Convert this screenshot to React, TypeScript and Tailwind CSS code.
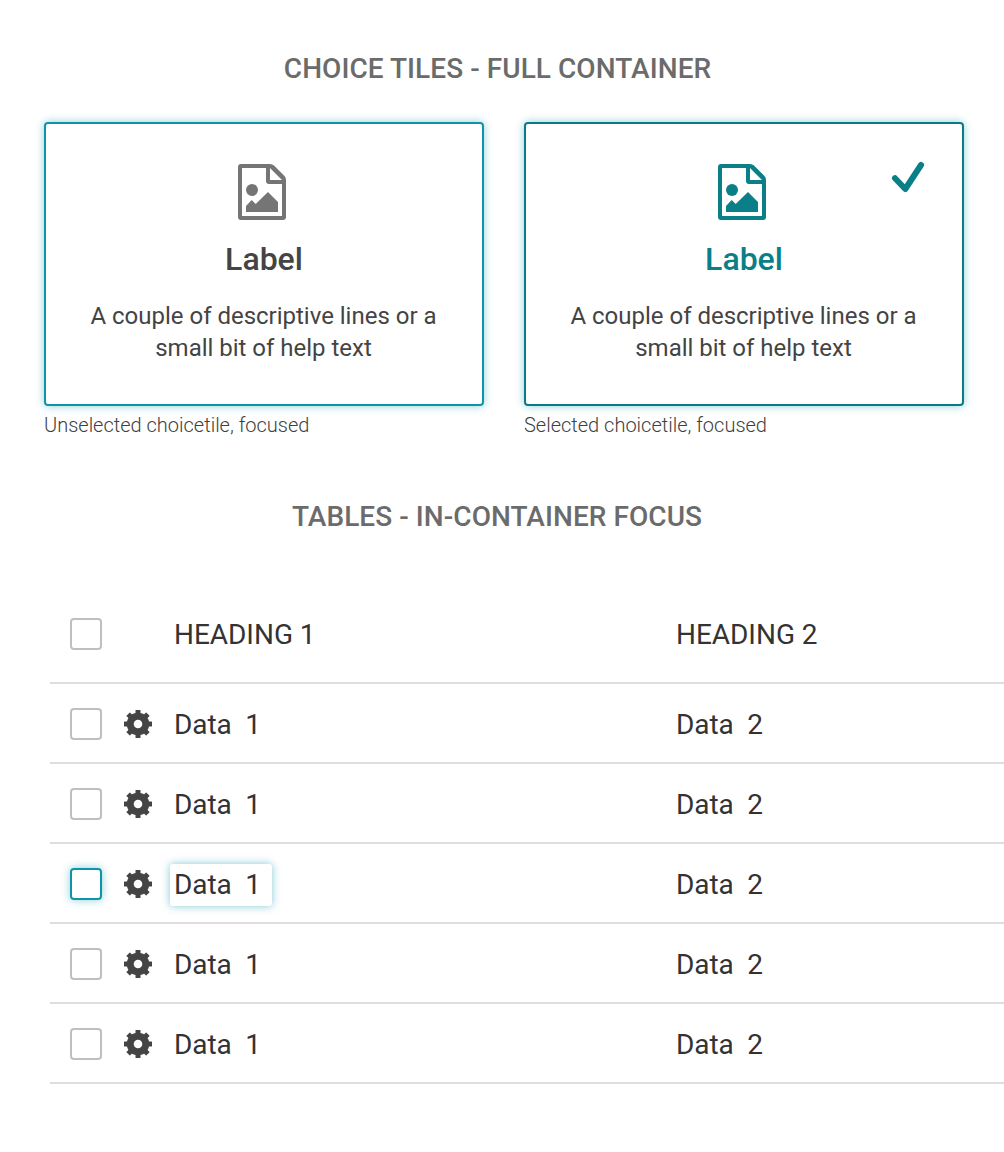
import React from "react";

const PictureIcon = () => (
  <svg width="48" height="56" viewBox="0 0 48 56" className="block">
    <path fillRule="evenodd" fill="currentColor" d="M3 0H32Q34.5 0 36 1.5L46.500 12Q48 13.500 48 16V53Q48 56 45 56H3Q0 56 0 53V3Q0 0 3 0ZM4 4V52H44V20H31Q28 20 28 17V4ZM32 4V16H44Z" />
    <circle cx="14" cy="26" r="6" fill="currentColor" />
    <path fill="currentColor" d="M8 48V42L13.700 36L17.700 40L30 28L40 38V48Z" />
  </svg>
);

const Gear = () => (
  <svg width="28" height="28" viewBox="0 0 28 28" className="ml-[22px] shrink-0 text-[#444444]">
    <g fill="currentColor">
      <rect x="11.500" y="0" width="5" height="28" rx="0.500" />
      <rect x="11.500" y="0" width="5" height="28" rx="0.500" transform="rotate(45 14 14)" />
      <rect x="11.500" y="0" width="5" height="28" rx="0.500" transform="rotate(90 14 14)" />
      <rect x="11.500" y="0" width="5" height="28" rx="0.500" transform="rotate(135 14 14)" />
      <circle cx="14" cy="14" r="11.300" />
    </g>
    <circle cx="14" cy="14" r="4.300" fill="#fff" />
  </svg>
);

const Tile = ({ selected }: { selected?: boolean }) => (
  <div className="w-[440px]">
    <div className={`relative flex h-[284px] flex-col items-center rounded-[4px] border-2 pt-10 shadow-[0_0_8px_rgba(0,150,170,0.45)] ${selected ? "border-[#0a7a83]" : "border-[#0e93a8]"}`}>
      <div className={`mr-1 ${selected ? "text-[#0a7f87]" : "text-[#757575]"}`}><PictureIcon /></div>
      <div className={`mt-[19px] h-10 text-[32px] leading-10 font-medium ${selected ? "text-[#0a7f87]" : "text-[#444444]"}`}>Label</div>
      <p className="mt-[21px] mr-px text-center text-[24px] leading-8 tracking-[-0.01px] text-[#444444]">A couple of descriptive lines or a<br />small bit of help text</p>
      {selected && (
        <svg width="34" height="34" viewBox="0 0 34 34" className="absolute top-[37px] right-[37px]">
          <path d="M4 17.200L14.300 28L30 4" fill="none" stroke="#0a7f87" strokeWidth="6" strokeLinecap="round" strokeLinejoin="round" />
        </svg>
      )}
    </div>
    <div className="mt-[3px] h-8 text-[20px] leading-8 font-light text-[#404040]">{selected ? "Selected" : "Unselected"} choicetile, focused</div>
  </div>
);

export default function App() {
  return (
    <main className="h-[1152px] w-[1004px] overflow-hidden bg-white pt-[49px] font-['Roboto',sans-serif]">
      <h1 className="h-10 w-[995px] text-center text-[28px] leading-10 font-medium tracking-[0.06px] text-[#6b6b6b]">CHOICE TILES - FULL CONTAINER</h1>
      <section className="mt-[33px] ml-11 flex gap-10">
        <Tile />
        <Tile selected />
      </section>
      <h2 className="mt-[56px] h-10 w-[994px] text-center text-[28px] leading-10 font-medium tracking-[0.06px] text-[#6b6b6b]">TABLES - IN-CONTAINER FOCUS</h2>
      <section className="mt-[47px] ml-[50px] text-[28px] text-[#333333]">
        <div className="flex h-[100px] items-center border-b-2 border-[#dedede] pt-0.5 pl-5">
          <span className="size-8 rounded-[4px] border-2 border-[#bfbfbf]" />
          <span className="ml-[72px] w-[502px] pt-0.5 tracking-[-0.04px]">HEADING 1</span>
          <span className="pt-0.5 tracking-[-0.04px]">HEADING 2</span>
        </div>
        {[0, 1, 2, 3, 4].map((i) => (
          <div key={i} className="flex h-20 items-center border-b-2 border-[#dedede] pt-0.5 pl-5">
            <span className={`size-8 rounded-[4px] border-2 ${i === 2 ? "border-[#0e93a8] shadow-[0_0_8px_rgba(0,150,170,0.45)]" : "border-[#bfbfbf]"}`} />
            <Gear />
            <span className="ml-[18px] flex w-[506px] pt-0.5">
              <span className={`h-[42px] w-[102px] rounded-[3px] pl-1 leading-[42px] tracking-[-0.1px] whitespace-pre ${i === 2 ? "shadow-[0_0_8px_rgba(0,150,170,0.5)]" : ""}`}>Data  1</span>
            </span>
            <span className="pt-0.5 whitespace-pre tracking-[-0.1px]">Data  2</span>
          </div>
        ))}
      </section>
    </main>
  );
}
